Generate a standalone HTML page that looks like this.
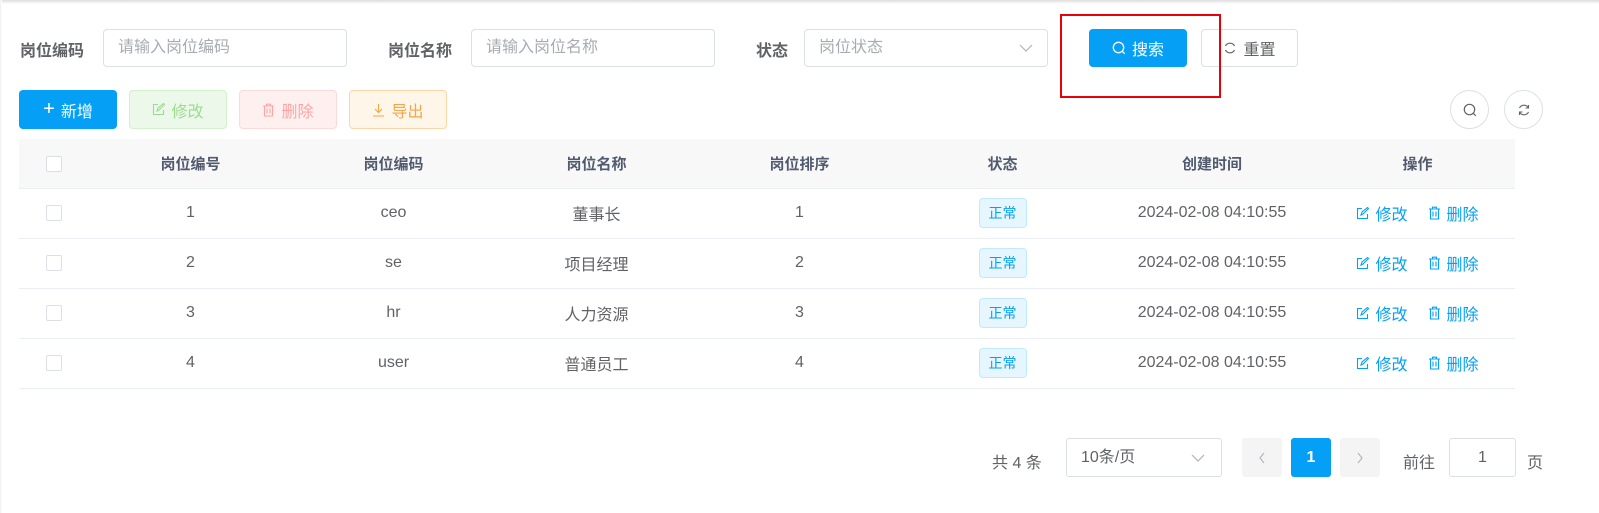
<!DOCTYPE html>
<html style="width:1599px;height:513px;overflow:hidden"><head><meta charset="utf-8"><style>
*{box-sizing:border-box;margin:0;padding:0}
body{width:1599px;height:513px;background:#fff;font-family:"Liberation Sans","Noto Sans CJK SC",sans-serif;font-size:14px;color:#606266;position:relative;overflow:hidden}
.a{position:absolute}
.top{left:0;top:0;width:1599px;height:4px;background:linear-gradient(#ddd,#fff)}
.left{left:0;top:0;width:2px;height:513px;background:linear-gradient(90deg,#eee,#fff)}
.lbl{font-weight:bold;color:#606266;font-size:16px;top:37px}
.inp{border:1px solid #dcdfe6;border-radius:4px;height:38px;top:29px;color:#a8abb2;font-size:16px;padding-left:14px;line-height:36px}
.btn{height:39px;border-radius:4px;font-size:16px;display:flex;align-items:center;justify-content:center;gap:6px}
table{position:absolute;left:19px;top:139px;width:1496px;border-collapse:collapse;table-layout:fixed}
th{height:49px;background:#f8f8f9;color:#515a6e;font-size:15px;font-weight:bold;border-bottom:1px solid #ebeef5}
td{height:50px;text-align:center;border-bottom:1px solid #ebeef5;font-size:16px;color:#606266}
.cb{display:inline-block;width:16px;height:16px;border:1px solid #dcdfe6;border-radius:2px;background:#fff;vertical-align:middle}
.tag{display:inline-block;padding:0 9px;height:30px;line-height:28px;background:#e6f6ff;border:1px solid #c2e8fe;color:#05a0f5;border-radius:4px;font-size:14px}
.op{color:#05a0f5;font-size:16px}
.op span{margin:0 10px;display:inline-flex;align-items:center;gap:6px}
.pg{top:438px;height:39px;border-radius:3px}
</style></head><body>
<div class="a top"></div><div class="a left"></div>
<div class="a lbl" style="left:20px">岗位编码</div>
<div class="a inp" style="left:103px;width:244px">请输入岗位编码</div>
<div class="a lbl" style="left:388px">岗位名称</div>
<div class="a inp" style="left:471px;width:244px">请输入岗位名称</div>
<div class="a lbl" style="left:756px">状态</div>
<div class="a inp" style="left:804px;width:244px">岗位状态<svg class="a" style="right:14px;top:13px" width="14" height="10" viewBox="0 0 14 10"><path d="M1 2l6 6 6-6" fill="none" stroke="#b0b3b8" stroke-width="1.2"/></svg></div>
<div class="a btn" style="left:1089px;top:29px;width:98px;height:38px;background:#05a0f5;color:#fff"><svg width="14" height="14" viewBox="0 0 14 14"><circle cx="6.5" cy="6.5" r="5.2" fill="none" stroke="#fff" stroke-width="1.3"/><path d="M10.3 10.3l2.5 2.5" stroke="#fff" stroke-width="1.3"/></svg>搜索</div>
<div class="a btn" style="left:1201px;top:29px;width:97px;height:38px;border:1px solid #dcdfe6;color:#606266"><svg width="14" height="14" viewBox="0 0 14 14"><path d="M11.5 5A5 5 0 0 0 2.5 5M2.5 9a5 5 0 0 0 9 0" fill="none" stroke="#606266" stroke-width="1.2"/></svg>重置</div>
<div class="a" style="left:1060px;top:14px;width:161px;height:84px;border:2px solid #e8000b"></div>
<div class="a btn" style="left:19px;top:90px;width:98px;background:#05a0f5;color:#fff"><span style="font-size:20px;font-weight:300">+</span>新增</div>
<div class="a btn" style="left:129px;top:90px;width:98px;background:#ecf8ea;border:1px solid #d2f0cc;color:#9ddc8f"><svg width="13" height="13" viewBox="0 0 13 13"><path d="M6 1.5H1.5v10h10V7M5 8l1-3 5.5-4.5 1 1L7 7z" fill="none" stroke="#9ddc8f" stroke-width="1.1"/></svg>修改</div>
<div class="a btn" style="left:239px;top:90px;width:98px;background:#fff0f0;border:1px solid #fdd9d9;color:#fba5a5"><svg width="13" height="14" viewBox="0 0 13 14"><path d="M1 3h11M4.5 3V1.2h4V3M2.5 3v10h8V3M5 5.5v5M8 5.5v5" fill="none" stroke="#fba5a5" stroke-width="1.1"/></svg>删除</div>
<div class="a btn" style="left:349px;top:90px;width:98px;background:#fff6ea;border:1px solid #fdd6a5;color:#f5a54a"><svg width="13" height="14" viewBox="0 0 13 14"><path d="M6.5 1v8M3 6l3.5 3.5L10 6M1 13h11" fill="none" stroke="#f5a54a" stroke-width="1.1"/></svg>导出</div>
<div class="a" style="left:1450px;top:90px;width:39px;height:39px;border:1px solid #dcdfe6;border-radius:50%"><svg class="a" style="left:12px;top:12px" width="14" height="14" viewBox="0 0 14 14"><circle cx="6.5" cy="6.5" r="5.2" fill="none" stroke="#606266" stroke-width="1.2"/><path d="M10.3 10.3l2.5 2.5" stroke="#606266" stroke-width="1.2"/></svg></div>
<div class="a" style="left:1504px;top:90px;width:39px;height:39px;border:1px solid #dcdfe6;border-radius:50%"><svg class="a" style="left:12px;top:12px" width="14" height="14" viewBox="0 0 14 14"><path d="M11.5 5A5 5 0 0 0 2.5 5M2.5 9a5 5 0 0 0 9 0M11.5 2v3h-3M2.5 12V9h3" fill="none" stroke="#606266" stroke-width="1.1"/></svg></div>
<table>
<colgroup><col style="width:70px"><col style="width:203px"><col style="width:203px"><col style="width:203px"><col style="width:203px"><col style="width:203px"><col style="width:216px"><col style="width:195px"></colgroup>
<tr><th><span class="cb"></span></th><th>岗位编号</th><th>岗位编码</th><th>岗位名称</th><th>岗位排序</th><th>状态</th><th>创建时间</th><th>操作</th></tr>
<tr><td><span class="cb"></span></td><td>1</td><td>ceo</td><td>董事长</td><td>1</td><td><span class="tag">正常</span></td><td>2024-02-08 04:10:55</td><td class="op"><span><svg width="13" height="13" viewBox="0 0 13 13"><path d="M6 1.5H1.5v10h10V7M5 8l1-3 5.5-4.5 1 1L7 7z" fill="none" stroke="#05a0f5" stroke-width="1.1"/></svg>修改</span><span><svg width="13" height="14" viewBox="0 0 13 14"><path d="M1 3h11M4.5 3V1.2h4V3M2.5 3v10h8V3M5 5.5v5M8 5.5v5" fill="none" stroke="#05a0f5" stroke-width="1.1"/></svg>删除</span></td></tr>
<tr><td><span class="cb"></span></td><td>2</td><td>se</td><td>项目经理</td><td>2</td><td><span class="tag">正常</span></td><td>2024-02-08 04:10:55</td><td class="op"><span><svg width="13" height="13" viewBox="0 0 13 13"><path d="M6 1.5H1.5v10h10V7M5 8l1-3 5.5-4.5 1 1L7 7z" fill="none" stroke="#05a0f5" stroke-width="1.1"/></svg>修改</span><span><svg width="13" height="14" viewBox="0 0 13 14"><path d="M1 3h11M4.5 3V1.2h4V3M2.5 3v10h8V3M5 5.5v5M8 5.5v5" fill="none" stroke="#05a0f5" stroke-width="1.1"/></svg>删除</span></td></tr>
<tr><td><span class="cb"></span></td><td>3</td><td>hr</td><td>人力资源</td><td>3</td><td><span class="tag">正常</span></td><td>2024-02-08 04:10:55</td><td class="op"><span><svg width="13" height="13" viewBox="0 0 13 13"><path d="M6 1.5H1.5v10h10V7M5 8l1-3 5.5-4.5 1 1L7 7z" fill="none" stroke="#05a0f5" stroke-width="1.1"/></svg>修改</span><span><svg width="13" height="14" viewBox="0 0 13 14"><path d="M1 3h11M4.5 3V1.2h4V3M2.5 3v10h8V3M5 5.5v5M8 5.5v5" fill="none" stroke="#05a0f5" stroke-width="1.1"/></svg>删除</span></td></tr>
<tr><td><span class="cb"></span></td><td>4</td><td>user</td><td>普通员工</td><td>4</td><td><span class="tag">正常</span></td><td>2024-02-08 04:10:55</td><td class="op"><span><svg width="13" height="13" viewBox="0 0 13 13"><path d="M6 1.5H1.5v10h10V7M5 8l1-3 5.5-4.5 1 1L7 7z" fill="none" stroke="#05a0f5" stroke-width="1.1"/></svg>修改</span><span><svg width="13" height="14" viewBox="0 0 13 14"><path d="M1 3h11M4.5 3V1.2h4V3M2.5 3v10h8V3M5 5.5v5M8 5.5v5" fill="none" stroke="#05a0f5" stroke-width="1.1"/></svg>删除</span></td></tr>
</table>
<div class="a" style="left:992px;top:449px;font-size:16px">共 4 条</div>
<div class="a pg" style="left:1066px;width:156px;border:1px solid #dcdfe6;font-size:16px;padding-left:14px;line-height:37px">10条/页<svg class="a" style="right:16px;top:14px" width="14" height="10" viewBox="0 0 14 10"><path d="M1 2l6 6 6-6" fill="none" stroke="#b0b3b8" stroke-width="1.2"/></svg></div>
<div class="a pg" style="left:1242px;width:40px;background:#f4f4f5"><svg class="a" style="left:16px;top:14px" width="8" height="12" viewBox="0 0 8 12"><path d="M6 1L2 6l4 5" fill="none" stroke="#b0b3b8" stroke-width="1.1"/></svg></div>
<div class="a pg" style="left:1291px;width:40px;background:#05a0f5;color:#fff;font-weight:bold;font-size:16px;text-align:center;line-height:39px">1</div>
<div class="a pg" style="left:1340px;width:40px;background:#f4f4f5"><svg class="a" style="left:16px;top:14px" width="8" height="12" viewBox="0 0 8 12"><path d="M2 1l4 5-4 5" fill="none" stroke="#b0b3b8" stroke-width="1.1"/></svg></div>
<div class="a" style="left:1403px;top:449px;font-size:16px">前往</div>
<div class="a pg" style="left:1449px;width:67px;border:1px solid #dcdfe6;text-align:center;line-height:37px;font-size:16px">1</div>
<div class="a" style="left:1527px;top:449px;font-size:16px">页</div>
</body></html>
